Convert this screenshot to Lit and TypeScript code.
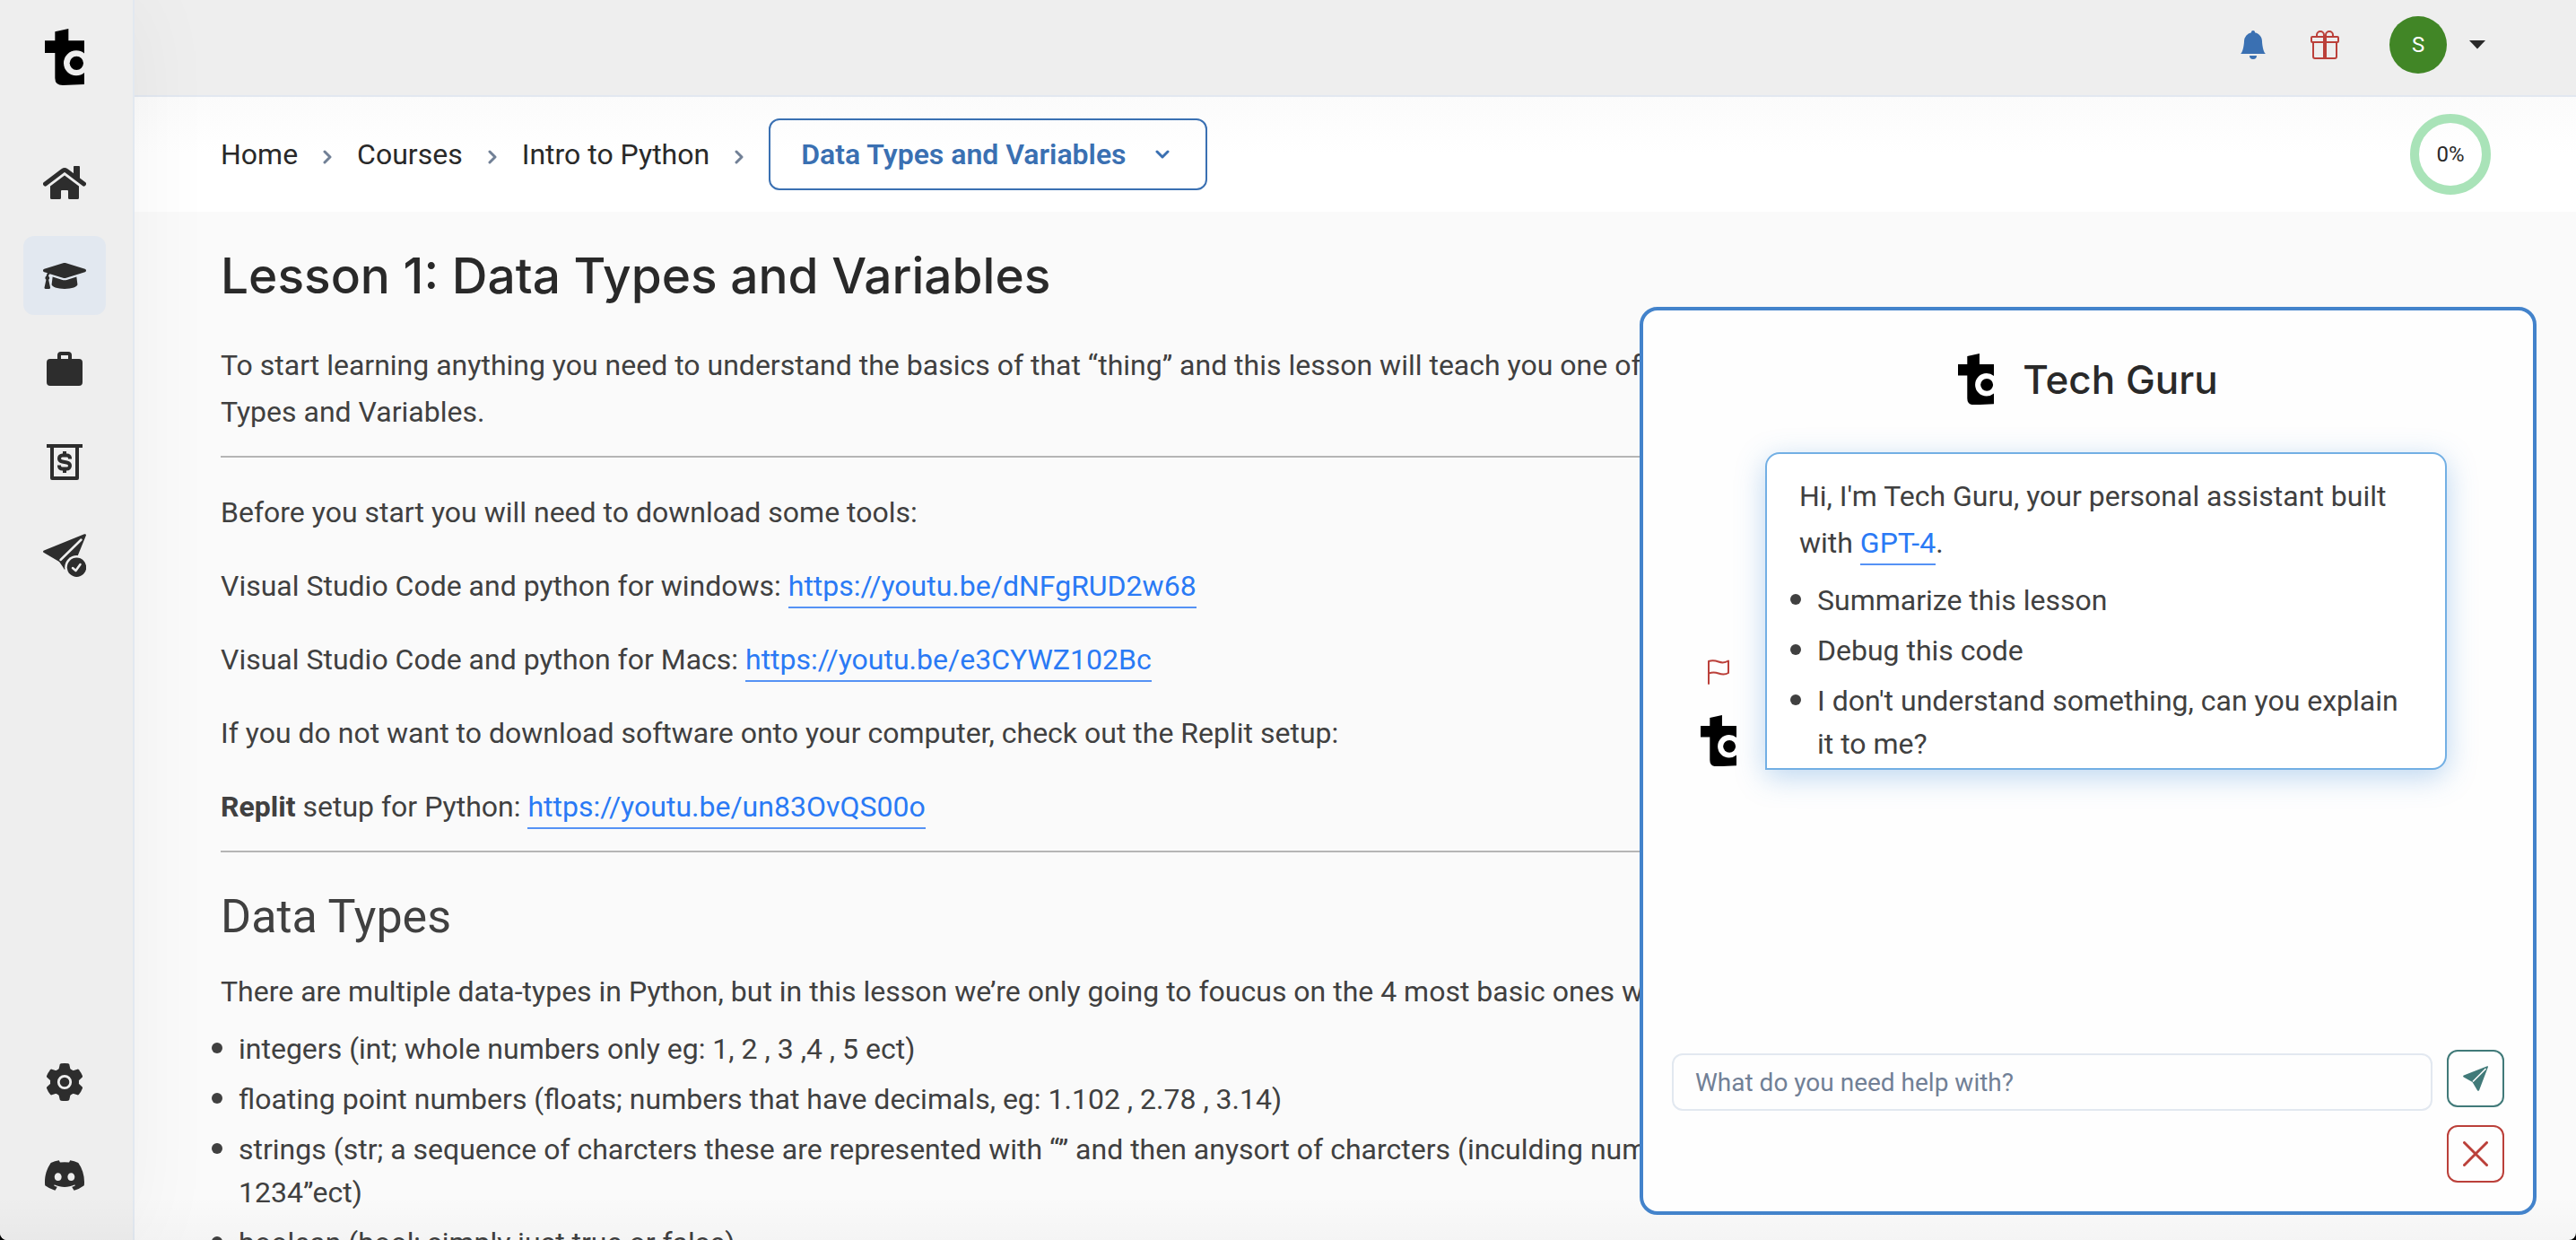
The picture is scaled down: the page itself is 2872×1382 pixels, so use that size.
import { LitElement, html, svg, css } from "lit";
import { customElement } from "lit/decorators.js";
import { classMap } from "lit/directives/class-map.js";

/* ---------- Icons ---------- */

const homeIcon = html`<svg width="48" height="37" viewBox="0 0 48 37" fill="currentColor" aria-hidden="true">
  <path d="M34.500 0H40a1 1 0 0 1 1 1V15L34 10V.5Z" />
  <path d="M2.500 20 22 5.200q2-1.400 4 0L45.500 20" fill="none" stroke="currentColor" stroke-width="5" stroke-linejoin="round" stroke-linecap="round" />
  <path d="M8 22.500 24 10.500 40 22.500V35.500A1.500 1.500 0 0 1 38.500 37H29.500A1.500 1.500 0 0 1 28 35.500V28A1 1 0 0 0 27 27H21A1 1 0 0 0 20 28V35.500A1.500 1.500 0 0 1 18.500 37H9.500A1.500 1.500 0 0 1 8 35.500Z" />
</svg>`;

const capIcon = html`<svg width="48" height="29" viewBox="0 64 640 384" fill="currentColor" aria-hidden="true">
  <path d="M622.34 153.2L343.4 67.5c-15.2-4.67-31.6-4.67-46.79 0L17.66 153.2c-23.54 7.23-23.54 38.36 0 45.59l48.63 14.94c-10.67 13.19-17.23 29.28-17.88 46.9C38.78 266.15 32 276.11 32 288c0 10.78 5.68 19.85 13.86 25.65L20.33 428.53C18.11 438.52 25.71 448 35.94 448h56.11c10.24 0 17.84-9.48 15.62-19.47L82.14 313.65C90.32 307.85 96 298.78 96 288c0-11.57-6.47-21.25-15.66-26.87.76-15.02 8.44-28.3 20.69-36.72L296.6 284.5c9.06 2.78 26.44 6.25 46.79 0l278.95-85.7c23.55-7.24 23.55-38.36 0-45.6zM352.79 315.09c-28.53 8.76-52.84 3.92-65.59 0l-145.02-44.55L128 384c0 35.35 85.96 64 192 64s192-28.65 192-64l-14.18-113.47-145.03 44.56z" />
</svg>`;

const briefcaseIcon = html`<svg width="40" height="38" viewBox="0 0 40 38" fill="currentColor" aria-hidden="true">
  <path fill-rule="evenodd" d="M12 8V4A4 4 0 0 1 16 0H24A4 4 0 0 1 28 4V8H36A4 4 0 0 1 40 12V34A4 4 0 0 1 36 38H4A4 4 0 0 1 0 34V12A4 4 0 0 1 4 8ZM16 8H24V4H16Z" />
</svg>`;

const receiptIcon = html`<svg width="40" height="40" viewBox="0 0 40 40" fill="none" stroke="currentColor" stroke-width="4" aria-hidden="true">
  <path d="M0 2H40M6 2V38H34V2" stroke-linejoin="round" />
  <path d="M26 16.500V15.500A3.500 3.500 0 0 0 22.500 12.500H17.500A3.500 3.500 0 0 0 14 16C14 18 15.200 19 17.500 19.500L22.500 20.500C24.800 21 26 22 26 24A3.500 3.500 0 0 1 22.500 27.500H17.500A3.500 3.500 0 0 1 14 24.500V23.500M20 8V12M20 28V32" />
</svg>`;

const planeCheckIcon = html`<svg width="48" height="48" viewBox="0 0 48 48" aria-hidden="true">
  <path fill="currentColor" d="M1 18.600 46 .3Q48.500-.3 47.800 2L38 26 24 40Q23 38 18 31L1 21Q-1 19.500 1 18.600Z" />
  <path class="cut-line" d="M19.500 29 42.500 6.500" fill="none" stroke-width="2.500" stroke-linecap="round" />
  <circle class="cut" cx="37.500" cy="37.300" r="13.300" />
  <circle fill="currentColor" cx="37.500" cy="37.300" r="10.700" />
  <path class="cut-line" d="M33 38 36.500 41 41.500 34" fill="none" stroke-width="2.500" stroke-linecap="round" stroke-linejoin="round" />
</svg>`;

const gearIcon = html`<svg width="40" height="42" viewBox="-20 -21 40 42" fill="currentColor" aria-hidden="true">
  <circle r="16" />
  ${[0, 60, 120, 180, 240, 300].map(
    (a) => svg`<path transform=${`rotate(${a})`} d="M-7 -12 -5.300 -19.500Q-5 -20.500 -4 -20.700 0 -21.300 4 -20.700 5 -20.500 5.300 -19.500L7 -12Z" />`
  )}
  <circle class="cut-line" r="6.700" fill="none" stroke-width="2.800" />
</svg>`;

const discordIcon = html`<svg width="44" height="34" viewBox="0 1.890 16 12.220" fill="currentColor" aria-hidden="true">
  <path d="M13.545 2.907a13.227 13.227 0 0 0-3.257-1.011.05.05 0 0 0-.052.025c-.141.25-.297.577-.406.833a12.19 12.19 0 0 0-3.658 0 8.258 8.258 0 0 0-.412-.833.051.051 0 0 0-.052-.025c-1.125.194-2.22.534-3.257 1.011a.041.041 0 0 0-.021.018C.356 6.024-.213 9.047.066 12.032c.001.014.01.028.021.037a13.276 13.276 0 0 0 3.995 2.02.05.05 0 0 0 .056-.019c.308-.42.582-.863.818-1.329a.05.05 0 0 0-.01-.059.051.051 0 0 0-.018-.011 8.875 8.875 0 0 1-1.248-.595.05.05 0 0 1-.02-.066.051.051 0 0 1 .015-.019c.084-.063.168-.129.248-.195a.05.05 0 0 1 .051-.007c2.619 1.196 5.454 1.196 8.041 0a.052.052 0 0 1 .053.007c.08.066.164.132.248.195a.051.051 0 0 1-.004.085 8.254 8.254 0 0 1-1.249.594.05.05 0 0 0-.03.03.052.052 0 0 0 .003.041c.24.465.515.909.817 1.329a.05.05 0 0 0 .056.019 13.235 13.235 0 0 0 4.001-2.02.049.049 0 0 0 .021-.037c.334-3.451-.559-6.449-2.366-9.106a.034.034 0 0 0-.02-.019Zm-8.198 7.307c-.789 0-1.438-.724-1.438-1.612 0-.889.637-1.613 1.438-1.613.807 0 1.45.73 1.438 1.613 0 .888-.637 1.612-1.438 1.612Zm5.316 0c-.788 0-1.438-.724-1.438-1.612 0-.889.637-1.613 1.438-1.613.807 0 1.451.73 1.438 1.613 0 .888-.631 1.612-1.438 1.612Z" />
</svg>`;

const bellIcon = html`<svg width="32" height="32" viewBox="0 0 16 16" fill="currentColor" aria-hidden="true">
  <path d="M8 16a2 2 0 0 0 2-2H6a2 2 0 0 0 2 2zm.995-14.901a1 1 0 1 0-1.99 0A5.002 5.002 0 0 0 3 6c0 1.098-.5 6-2 7h14c-1.5-1-2-5.902-2-7 0-2.42-1.72-4.44-4.005-4.901z" />
</svg>`;

const giftIcon = html`<svg width="32" height="32" viewBox="0 0 16 16" fill="currentColor" aria-hidden="true">
  <path d="M3 2.5a2.5 2.5 0 0 1 5 0 2.5 2.5 0 0 1 5 0v.006c0 .07 0 .27-.038.494H15a1 1 0 0 1 1 1v2a1 1 0 0 1-1 1v7.5a1.5 1.5 0 0 1-1.5 1.5h-11A1.5 1.5 0 0 1 1 14.5V7a1 1 0 0 1-1-1V4a1 1 0 0 1 1-1h2.038A2.968 2.968 0 0 1 3 2.506V2.5zm1.068.5H7v-.5a1.5 1.5 0 1 0-3 0c0 .085.002.274.045.43a.522.522 0 0 0 .023.07zM9 3h2.932a.56.56 0 0 0 .023-.07c.043-.156.045-.345.045-.43a1.5 1.5 0 0 0-3 0V3zM1 4v2h6V4H1zm8 0v2h6V4H9zm5 3H9v8h4.500a.5.5 0 0 0 .5-.5V7zm-7 8V7H2v7.500a.5.5 0 0 0 .5.5H7z" />
</svg>`;

const caretIcon = html`<svg width="20" height="10" viewBox="0 0 20 10" fill="currentColor" aria-hidden="true"><path d="M1 0H19L10 9.500Z" /></svg>`;

const chevronRight = html`<svg width="10" height="16" viewBox="0 0 10 16" fill="none" stroke="currentColor" stroke-width="3" stroke-linecap="round" stroke-linejoin="round" aria-hidden="true"><path d="M2 2 8 8 2 14" /></svg>`;

const chevronDown = html`<svg width="16" height="10" viewBox="0 0 16 10" fill="none" stroke="currentColor" stroke-width="3" stroke-linecap="round" stroke-linejoin="round" aria-hidden="true"><path d="M2 2 8 8 14 2" /></svg>`;

const flagIcon = html`<svg width="24" height="28" viewBox="0 0 24 28" fill="none" stroke="currentColor" stroke-width="2" stroke-linecap="round" stroke-linejoin="round" aria-hidden="true"><path d="M1 27V2C5 .5 8 1 12 2.500S19 4 23 1.500V15C19 17.500 16 17 12 15.500S5 14 1 15.500" /></svg>`;

const sendIcon = html`<svg width="28" height="28" viewBox="0 0 28 28" aria-hidden="true">
  <path fill="currentColor" d="M27 .2Q28.200 0 28 1L18 27.200Q17 28.500 16 27.200L10.500 18 .8 12.500Q-.6 11.500 .8 10.500Z" />
  <path class="cut-line" d="M11 17.500 25.500 3" fill="none" stroke-width="1.600" />
</svg>`;

const closeIcon = html`<svg width="28" height="28" viewBox="0 0 28 28" fill="none" stroke="currentColor" stroke-width="3" stroke-linecap="round" aria-hidden="true"><path d="M1.500 1.500 26.500 26.500M26.500 1.500 1.500 26.500" /></svg>`;

@customElement("brand-mark")
class BrandMark extends LitElement {
  static styles = css`
    :host {
      display: block;
      width: 44px;
      color: #000;
    }
    .mark {
      display: block;
      width: 100%;
      height: auto;
    }
    .ring {
      fill: var(--mark-bg, #fff);
    }
  `;
  render() {
    return html`<svg class="mark" viewBox="0 0 132 189" role="img" aria-label="Logo">
      <path fill="currentColor" d="M34 10 79 0V40H132V186L60 189Q34 189 34 165V81H0V40H34Z" />
      <circle class="ring" cx="105" cy="115" r="42" />
      <circle fill="currentColor" cx="106" cy="115" r="23" />
    </svg>`;
  }
}

/* ---------- Sidebar ---------- */

@customElement("side-nav")
class SideNav extends LitElement {
  static styles = css`
    :host {
      display: flex;
      flex-direction: column;
      align-items: center;
      box-sizing: border-box;
      padding: 32px 30px 28px 26px;
      background: #eee;
      border-right: 2px solid #e2e8f0;
      color: #2d2d2d;
      box-shadow: 0 0 100px rgba(0, 0, 0, 0.05);
      --cut: #eee;
    }
    .links {
      display: flex;
      flex-direction: column;
      gap: 16px;
      margin-top: 64px;
    }
    .foot {
      margin-top: auto;
    }
    .link {
      display: grid;
      place-items: center;
      width: 92px;
      height: 88px;
      border-radius: 12px;
      color: inherit;
    }
    .active {
      background: #e2e8f0;
    }
    .cut {
      fill: var(--cut);
    }
    .cut-line {
      stroke: var(--cut);
    }
    brand-mark {
      --mark-bg: #eee;
    }
  `;
  private link(label: string, icon: unknown, active = false) {
    return html`<a href="#" aria-label=${label} class=${classMap({ link: true, active })}>${icon}</a>`;
  }
  render() {
    return html`
      <brand-mark></brand-mark>
      <nav class="links">
        ${this.link("Home", homeIcon)} ${this.link("Courses", capIcon, true)}
        ${this.link("Jobs", briefcaseIcon)} ${this.link("Pricing", receiptIcon)}
        ${this.link("Submissions", planeCheckIcon)}
      </nav>
      <nav class="links foot">
        ${this.link("Settings", gearIcon)} ${this.link("Discord", discordIcon)}
      </nav>
    `;
  }
}

/* ---------- Chat panel ---------- */

@customElement("guru-chat")
class GuruChat extends LitElement {
  static styles = css`
    :host {
      display: flex;
      flex-direction: column;
      box-sizing: border-box;
      background: #fefefe;
      border: 4px solid #4383cb;
      border-radius: 20px;
      font-family: Roboto, sans-serif;
      font-size: 32px;
      color: #404040;
    }
    .head {
      display: flex;
      justify-content: center;
      align-items: center;
      gap: 32px;
      padding-top: 48px;
    }
    brand-mark {
      width: 40px;
    }
    .title {
      margin: 0;
      font: 500 44px/56px Inter, sans-serif;
      color: #292929;
    }
    .message {
      display: flex;
      align-items: flex-end;
      gap: 32px;
      padding: 53px 96px 0 64px;
    }
    .who {
      display: flex;
      flex-direction: column;
      align-items: center;
      gap: 34px;
      padding-bottom: 4px;
    }
    .flag {
      display: block;
      padding: 0;
      border: 0;
      background: none;
      color: #bb403a;
      line-height: 0;
    }
    .bubble {
      flex: 1;
      padding: 21px 36px 3px;
      border: 2px solid #72afe4;
      border-radius: 16px 16px 16px 0;
      background: #fff;
      box-shadow: 0 8px 32px rgba(66, 139, 214, 0.35);
    }
    .text {
      margin: 0;
      line-height: 52px;
    }
    .anchor {
      color: #2a7af5;
      text-decoration: none;
      border-bottom: 2px solid #5592f5;
      padding-bottom: 4px;
    }
    .list {
      display: flex;
      flex-direction: column;
      gap: 8px;
      list-style: none;
      margin: 14px 0 0 -10px;
      padding: 0;
      line-height: 48px;
    }
    .item {
      display: grid;
      grid-template-columns: 12px 1fr;
      column-gap: 18px;
    }
    .item::before {
      content: "";
      height: 12px;
      margin-top: 17px;
      border-radius: 50%;
      background: currentColor;
    }
    .composer {
      display: flex;
      align-items: flex-start;
      gap: 16px;
      margin-top: auto;
      padding: 0 32px 32px;
    }
    .field {
      flex: 1;
      min-width: 0;
      box-sizing: border-box;
      height: 64px;
      margin-top: 4px;
      padding: 0 24px;
      border: 2px solid #e2e8f0;
      border-radius: 12px;
      background: transparent;
      font: 400 28px Roboto, sans-serif;
      color: #404040;
    }
    .field::placeholder {
      color: #718096;
      opacity: 1;
    }
    .actions {
      display: flex;
      flex-direction: column;
      gap: 20px;
    }
    .action {
      display: grid;
      place-items: center;
      box-sizing: border-box;
      width: 64px;
      height: 64px;
      padding: 0;
      border: 2px solid currentColor;
      border-radius: 12px;
      background: transparent;
      color: #417a79;
    }
    .close {
      color: #bb403a;
    }
    .cut-line {
      stroke: #fefefe;
    }
  `;
  render() {
    const prompts = ["Summarize this lesson", "Debug this code", "I don't understand something, can you explain it to me?"];
    return html`
      <header class="head">
        <brand-mark></brand-mark>
        <h2 class="title">Tech Guru</h2>
      </header>
      <div class="message">
        <div class="who">
          <button class="flag" type="button" aria-label="Report message">${flagIcon}</button>
          <brand-mark></brand-mark>
        </div>
        <div class="bubble">
          <p class="text">Hi, I'm Tech Guru, your personal assistant built with <a class="anchor" href="#">GPT-4</a>.</p>
          <ul class="list">
            ${prompts.map((t) => html`<li class="item"><span>${t}</span></li>`)}
          </ul>
        </div>
      </div>
      <form class="composer" @submit=${(e: Event) => e.preventDefault()}>
        <input class="field" type="text" aria-label="Message" placeholder="What do you need help with?" />
        <div class="actions">
          <button class="action" type="submit" aria-label="Send">${sendIcon}</button>
          <button class="action close" type="button" aria-label="Close">${closeIcon}</button>
        </div>
      </form>
    `;
  }
}

/* ---------- Page ---------- */

@customElement("app-root")
class AppRoot extends LitElement {
  static styles = css`
    :host {
      display: block;
      background: #000;
      font-family: Roboto, sans-serif;
      font-size: 32px;
      color: #404040;
    }
    .shell {
      position: relative;
      display: grid;
      grid-template-columns: 150px minmax(0, 1fr);
      height: 100vh;
      overflow: hidden;
      border-radius: 0 0 8px 8px;
      background: #fafafa;
    }
    side-nav {
      position: relative;
      z-index: 1;
    }
    .main {
      min-width: 0;
      overflow: hidden;
    }
    .topbar {
      display: flex;
      justify-content: flex-end;
      align-items: center;
      padding: 18px 100px 24px;
      background: #eee;
      border-bottom: 2px solid #e2e8f0;
    }
    .plain {
      display: flex;
      align-items: center;
      gap: 24px;
      padding: 0;
      border: 0;
      background: none;
      font: inherit;
      color: #292929;
    }
    .bell {
      color: #3a70b2;
      margin-right: 48px;
    }
    .gift {
      color: #bb403a;
      margin-right: 56px;
    }
    .avatar {
      display: grid;
      place-items: center;
      width: 64px;
      height: 64px;
      border-radius: 50%;
      background: #418626;
      color: #fff;
      font-size: 24px;
    }
    .crumbbar {
      display: flex;
      justify-content: space-between;
      align-items: center;
      height: 128px;
      padding: 0 95px 0 96px;
      background: linear-gradient(#fbfbfb, #fff 50%);
      color: #292929;
    }
    .crumbs {
      display: flex;
      align-items: center;
      gap: 28px;
      margin: 0;
      padding: 0;
      list-style: none;
    }
    .crumb {
      display: flex;
      align-items: center;
      gap: 28px;
    }
    .sep {
      display: flex;
      padding-top: 6px;
      color: #718096;
    }
    .crumb-link {
      color: inherit;
      text-decoration: none;
    }
    .lesson-pick {
      display: flex;
      align-items: center;
      gap: 32px;
      height: 80px;
      padding: 0 40px 0 34px;
      border: 2px solid #3a70b2;
      border-radius: 12px;
      background: transparent;
      font: 600 32px Roboto, sans-serif;
      color: #3a70b2;
    }
    .progress {
      display: grid;
      place-items: center;
      box-sizing: border-box;
      width: 90px;
      height: 90px;
      border: 10px solid #a9e3b8;
      border-radius: 50%;
      font-size: 24px;
    }
    .article {
      padding: 38px 96px 0;
    }
    .h1 {
      margin: 0 0 41px;
      font: 500 55px/66px Inter, sans-serif;
      color: #292929;
    }
    .h2 {
      margin: 0 0 25px;
      font-size: 52px;
      font-weight: 400;
      line-height: 64px;
    }
    .text {
      margin: 0;
      line-height: 52px;
      white-space: nowrap;
    }
    .text + .text {
      margin-top: 30px;
    }
    .rule {
      margin: 23px 0 35px;
      border: 0;
      border-top: 2px solid #b5b5b5;
    }
    .section {
      margin-bottom: 40px;
    }
    .anchor {
      color: #2a7af5;
      text-decoration: none;
      border-bottom: 2px solid #5592f5;
      padding-bottom: 4px;
    }
    .list {
      display: flex;
      flex-direction: column;
      gap: 8px;
      list-style: none;
      margin: 14px 0 0 -10px;
      padding: 0;
      line-height: 48px;
      white-space: nowrap;
    }
    .item {
      display: grid;
      grid-template-columns: 12px 1fr;
      column-gap: 18px;
    }
    .item::before {
      content: "";
      height: 12px;
      margin-top: 17px;
      border-radius: 50%;
      background: currentColor;
    }
    .shade {
      position: absolute;
      inset: auto 0 0 0;
      height: 48px;
      background: linear-gradient(rgba(0, 0, 0, 0), rgba(0, 0, 0, 0.025));
      z-index: 2;
      pointer-events: none;
    }
    guru-chat {
      position: absolute;
      z-index: 3;
      top: 342px;
      right: 44px;
      bottom: 28px;
      width: 1000px;
    }
  `;
  private link(url: string) {
    return html`<a class="anchor" href=${url}>${url}</a>`;
  }
  render() {
    const crumbs = ["Home", "Courses", "Intro to Python"];
    return html`
      <div class="shell">
        <side-nav></side-nav>
        <div class="main">
          <header class="topbar">
            <button class="plain bell" type="button" aria-label="Notifications">${bellIcon}</button>
            <button class="plain gift" type="button" aria-label="Rewards">${giftIcon}</button>
            <button class="plain" type="button" aria-label="Account">
              <span class="avatar">S</span>${caretIcon}
            </button>
          </header>
          <div class="crumbbar">
            <ol class="crumbs">
              ${crumbs.map(
                (c) => html`<li class="crumb"><a class="crumb-link" href="#">${c}</a><span class="sep">${chevronRight}</span></li>`
              )}
              <li><button class="lesson-pick" type="button">Data Types and Variables ${chevronDown}</button></li>
            </ol>
            <div class="progress">0%</div>
          </div>
          <article class="article">
            <h1 class="h1">Lesson 1: Data Types and Variables</h1>
            <p class="text">To start learning anything you need to understand the basics of that “thing” and this lesson will teach you one of the basics: Data<br />Types and Variables.</p>
            <hr class="rule" />
            <p class="text">Before you start you will need to download some tools:</p>
            <p class="text">Visual Studio Code and python for windows: ${this.link("https://youtu.be/dNFgRUD2w68")}</p>
            <p class="text">Visual Studio Code and python for Macs: ${this.link("https://youtu.be/e3CYWZ102Bc")}</p>
            <p class="text">If you do not want to download software onto your computer, check out the Replit setup:</p>
            <p class="text"><strong>Replit</strong> setup for Python: ${this.link("https://youtu.be/un83OvQS00o")}</p>
            <hr class="rule section" />
            <h2 class="h2">Data Types</h2>
            <p class="text">There are multiple data-types in Python, but in this lesson we’re only going to foucus on the 4 most basic ones which are:</p>
            <ul class="list">
              <li class="item"><span>integers (int; whole numbers only eg: 1, 2 , 3 ,4 , 5 ect)</span></li>
              <li class="item"><span>floating point numbers (floats; numbers that have decimals, eg: 1.102 , 2.78 , 3.14)</span></li>
              <li class="item"><span>strings (str; a sequence of charcters these are represented with “” and then anysort of charcters (inculding numbers eg: “<br />1234”ect)</span></li>
              <li class="item"><span>boolean (bool; simply just true or false)</span></li>
            </ul>
          </article>
        </div>
        <div class="shade"></div>
        <guru-chat></guru-chat>
      </div>
    `;
  }
}
